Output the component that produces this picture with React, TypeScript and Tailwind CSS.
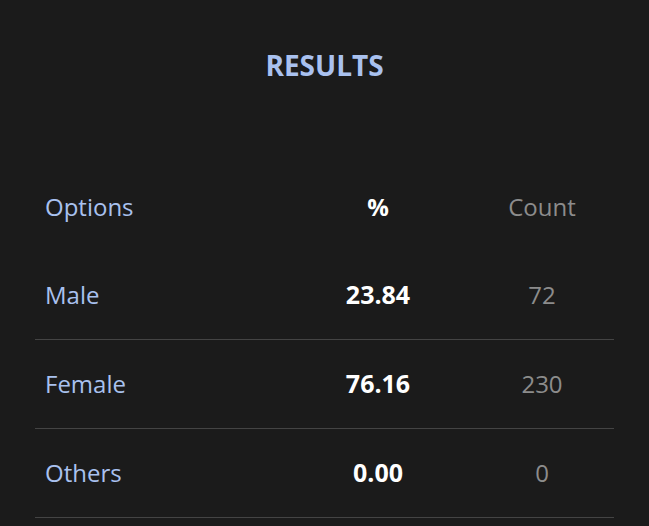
import React from 'react';

const rows = [
  { label: 'Male', pct: '23.84', count: '72' },
  { label: 'Female', pct: '76.16', count: '230' },
  { label: 'Others', pct: '0.00', count: '0' },
];

export default function App() {
  return (
    <div className="min-h-screen w-full bg-[#1b1b1b] font-['Open_Sans',sans-serif] overflow-hidden">
      <h1 className="pt-[48px] text-center text-[28px] leading-[34px] font-bold text-[#a9c1ef]">RESULTS</h1>

      <div className="mx-[35px] mt-[80px]">
        <div className="grid h-[89px] grid-cols-[250px_186px_142px] items-center text-[24px]">
          <div className="pl-[10px] text-[#a9c1ef]">Options</div>
          <div className="text-center font-bold text-white">%</div>
          <div className="text-center text-[#8c8c8c]">Count</div>
        </div>
        {rows.map(r => (
          <div key={r.label} className="grid h-[89px] grid-cols-[250px_186px_142px] items-center border-b border-[#444] text-[24px]">
            <div className="pl-[10px] text-[#a9c1ef]">{r.label}</div>
            <div className="text-center text-[25px] font-bold text-white">{r.pct}</div>
            <div className="text-center text-[#8c8c8c]">{r.count}</div>
          </div>
        ))}
      </div>
    </div>
  );
}
